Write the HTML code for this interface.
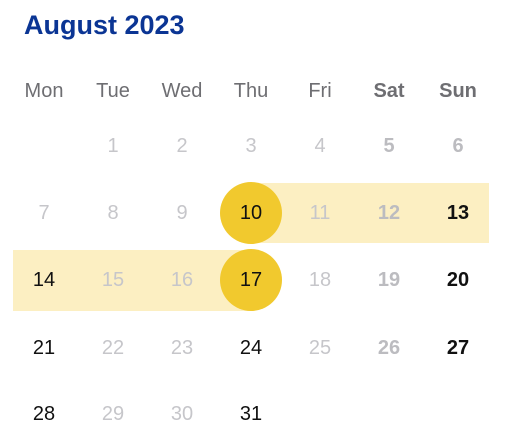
<!DOCTYPE html>
<html><head><style>
body{margin:0;width:512px;height:447px;background:#fff;font-family:"Liberation Sans",sans-serif;position:relative;overflow:hidden}
.t{position:absolute;left:24px;top:10px;font-size:27px;font-weight:bold;color:#0b3594}
.c{position:absolute;width:70px;text-align:center;font-size:20px;line-height:24px;transform:translateY(-12px)}
.h{color:#6e6e72}
.g{color:#c6c6ca}
.gb{color:#bcbcc0;font-weight:bold}
.k{color:#111}
.kb{color:#111;font-weight:bold}
.hb{color:#6e6e72;font-weight:bold}
.band{position:absolute;background:#fcefc2}
.circ{position:absolute;width:62px;height:62px;border-radius:50%;background:#f1c92e}
</style></head><body>
<div class="t">August 2023</div>
<div class="band" style="left:251px;top:183px;width:238px;height:60px"></div>
<div class="band" style="left:13px;top:250px;width:238px;height:61px"></div>
<div class="circ" style="left:220px;top:182px"></div>
<div class="circ" style="left:220px;top:249px"></div>
<div id="g"></div>
<script>
var cx=[44,113,182,251,320,389,458];
var rows=[
[91,[["Mon","h"],["Tue","h"],["Wed","h"],["Thu","h"],["Fri","h"],["Sat","hb"],["Sun","hb"]]],
[146,[["",""],["1","g"],["2","g"],["3","g"],["4","g"],["5","gb"],["6","gb"]]],
[213,[["7","g"],["8","g"],["9","g"],["10","k"],["11","g"],["12","gb"],["13","kb"]]],
[280,[["14","k"],["15","g"],["16","g"],["17","k"],["18","g"],["19","gb"],["20","kb"]]],
[348,[["21","k"],["22","g"],["23","g"],["24","k"],["25","g"],["26","gb"],["27","kb"]]],
[414,[["28","k"],["29","g"],["30","g"],["31","k"]]]
];
var h="";
rows.forEach(function(r){r[1].forEach(function(d,i){if(d[0])h+='<div class="c '+d[1]+'" style="left:'+(cx[i]-35)+'px;top:'+r[0]+'px">'+d[0]+'</div>';});});
document.getElementById("g").innerHTML=h;
</script>
</body></html>
